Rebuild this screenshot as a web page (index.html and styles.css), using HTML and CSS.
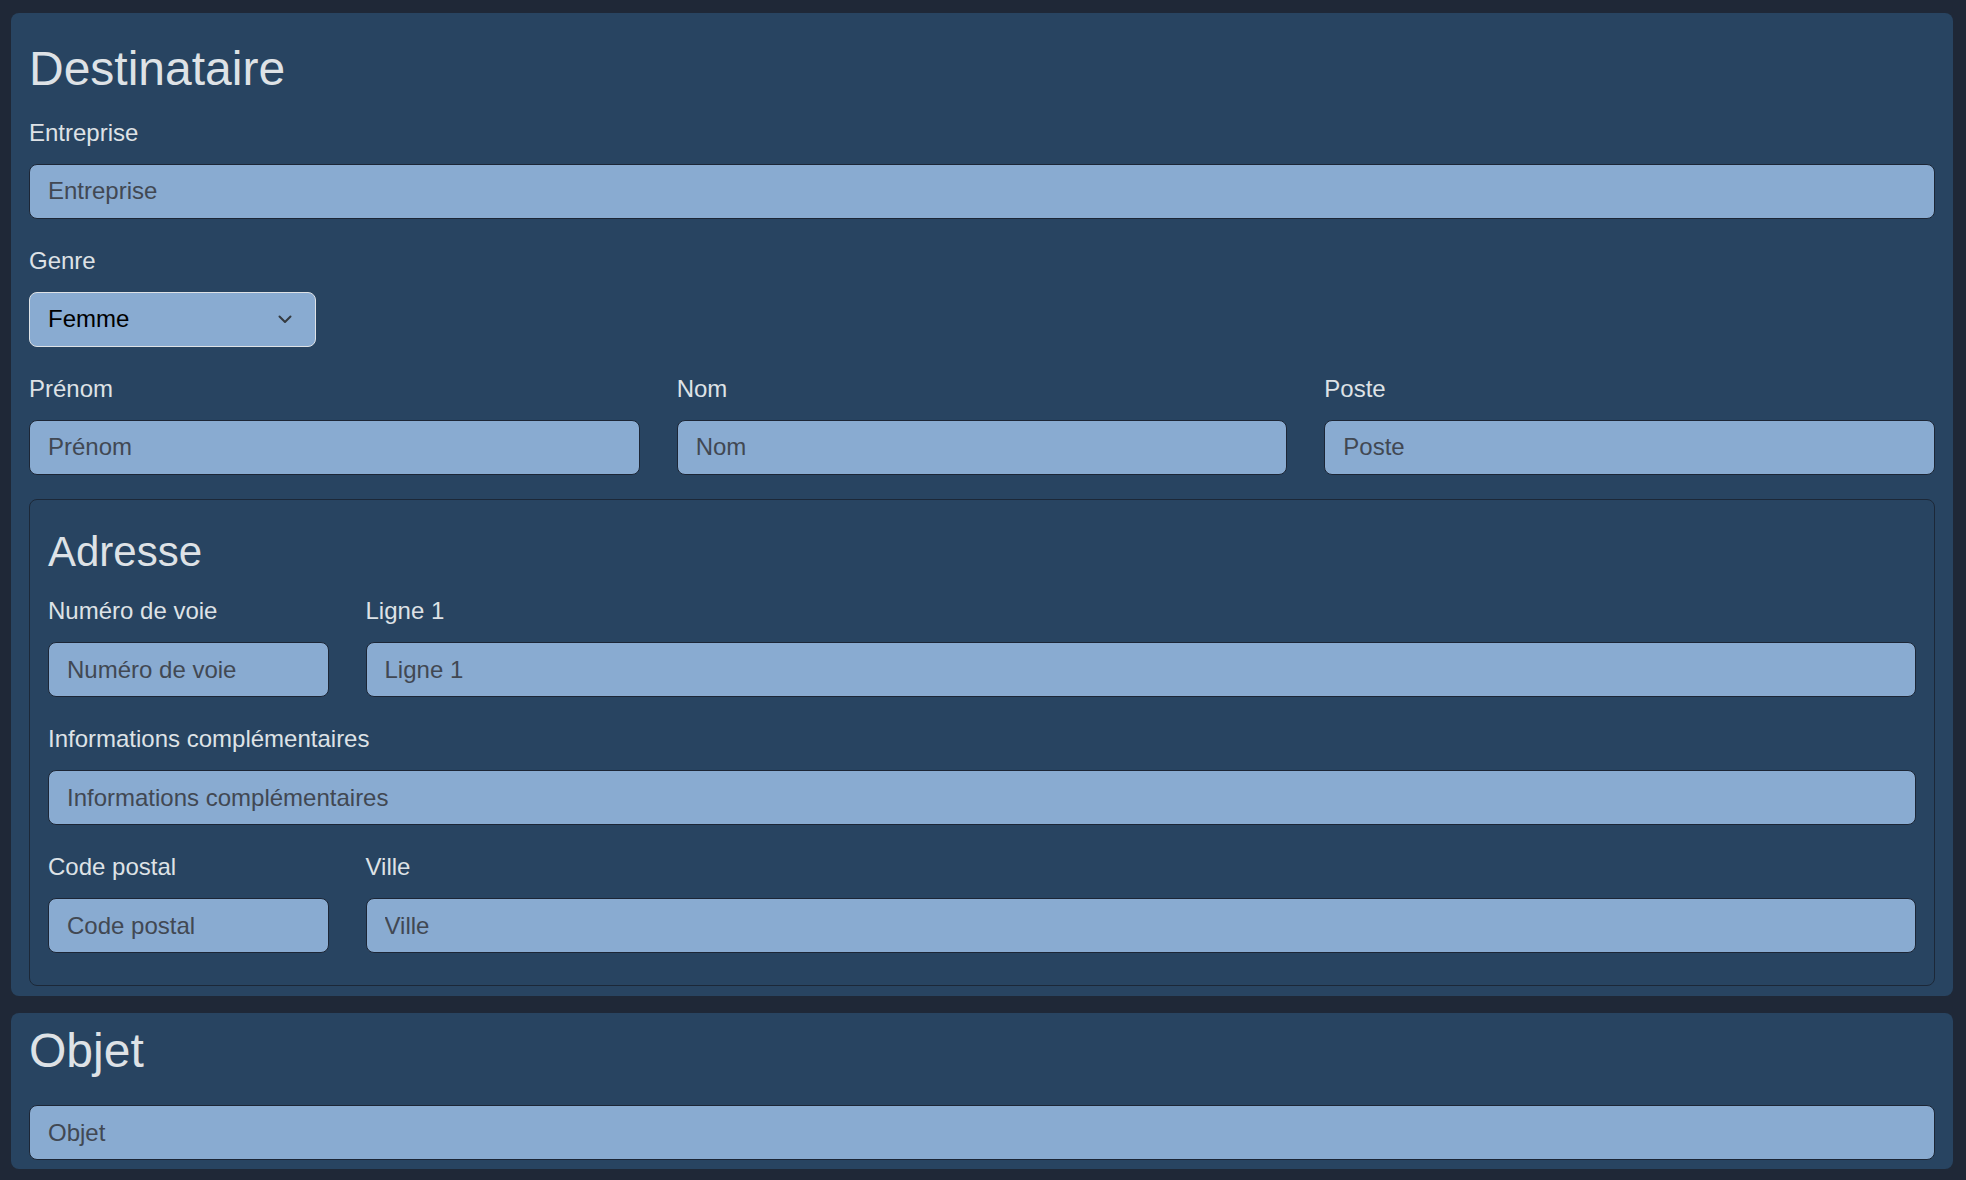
FILE: index.html
```html
<!DOCTYPE html>
<html lang="fr">
<head>
<meta charset="utf-8">
<title>Destinataire</title>
<link rel="stylesheet" href="styles.css">
</head>
<body>
  <section class="card card-main">
    <h2 class="card-title">Destinataire</h2>
    <div class="group">
      <label class="label">Entreprise</label>
      <input class="field" type="text" placeholder="Entreprise">
    </div>
    <div class="group">
      <label class="label">Genre</label>
      <div class="select">
        <span class="select-value">Femme</span>
        <svg class="chevron" viewBox="0 0 16 11" width="16" height="11"><path d="M2.5 2.5l5.5 5.5 5.5-5.5" fill="none" stroke="#343a40" stroke-width="2" stroke-linecap="round" stroke-linejoin="round"/></svg>
      </div>
    </div>
    <div class="row row-3">
      <div class="group">
        <label class="label">Prénom</label>
        <input class="field" type="text" placeholder="Prénom">
      </div>
      <div class="group">
        <label class="label">Nom</label>
        <input class="field" type="text" placeholder="Nom">
      </div>
      <div class="group">
        <label class="label">Poste</label>
        <input class="field" type="text" placeholder="Poste">
      </div>
    </div>
    <fieldset class="address">
      <h3 class="address-title">Adresse</h3>
      <div class="row row-12">
        <div class="group span-2">
          <label class="label">Numéro de voie</label>
          <input class="field" type="text" placeholder="Numéro de voie">
        </div>
        <div class="group span-10">
          <label class="label">Ligne 1</label>
          <input class="field" type="text" placeholder="Ligne 1">
        </div>
      </div>
      <div class="group">
        <label class="label">Informations complémentaires</label>
        <input class="field" type="text" placeholder="Informations complémentaires">
      </div>
      <div class="row row-12">
        <div class="group span-2">
          <label class="label">Code postal</label>
          <input class="field" type="text" placeholder="Code postal">
        </div>
        <div class="group span-10">
          <label class="label">Ville</label>
          <input class="field" type="text" placeholder="Ville">
        </div>
      </div>
    </fieldset>
  </section>
  <section class="card card-object">
    <h2 class="card-title">Objet</h2>
    <input class="field" type="text" placeholder="Objet">
  </section>
</body>
</html>
```
FILE: styles.css
```css
* { box-sizing: border-box; }

html, body {
  margin: 0;
  background: #1f2837;
}

body {
  padding: 13px 13px 11px 11px;
  font-family: "Liberation Sans", Arial, sans-serif;
  font-size: 24px;
  line-height: 1.5;
  color: #dee2e6;
  display: flex;
  flex-direction: column;
  gap: 17px;
}

.card {
  background: #284461;
  border-radius: 8px;
  padding: 0 18px 10px 18px;
}

.card-main { padding-top: 26.6px; }
.card-object { padding-top: 8.5px; padding-bottom: 9px; }

.card-title {
  margin: 0 0 17.5px;
  font-size: 48px;
  font-weight: 400;
  line-height: 1.2;
  color: #dee2e6;
}

.card-object .card-title { margin-bottom: 26px; }

.group {
  margin-bottom: 24px;
  min-width: 0;
}

.label {
  display: block;
  margin-bottom: 13px;
  color: #dee2e6;
}

.field {
  display: block;
  width: 100%;
  height: 55px;
  margin: 0;
  padding: 0 18px;
  font-family: inherit;
  font-size: 24px;
  color: #212529;
  background: #89abd1;
  border: 1px solid #1c2636;
  border-radius: 8px;
  outline: none;
}

.field::placeholder {
  color: #414853;
  opacity: 1;
}

.select {
  width: 287px;
  height: 55px;
  padding: 0 22px 0 18px;
  display: flex;
  align-items: center;
  justify-content: space-between;
  background: #89abd1;
  border: 1px solid #dee2e6;
  border-radius: 8px;
  color: #000;
}

.chevron {
  display: block;
  width: 16px;
  height: 11px;
  margin-top: 1px;
}

.row {
  display: grid;
  column-gap: 37px;
}

.row-3 { grid-template-columns: repeat(3, 1fr); }
.row-12 { grid-template-columns: repeat(12, 1fr); }
.span-2 { grid-column: span 2; }
.span-10 { grid-column: span 10; }

.address {
  margin: 0;
  padding: 27px 18px 8px 18px;
  border: 1px solid #1c2838;
  border-radius: 8px;
  min-width: 0;
}

.address-title {
  margin: 0 0 16px;
  font-size: 42px;
  font-weight: 400;
  line-height: 1.2;
  color: #dee2e6;
}
```
